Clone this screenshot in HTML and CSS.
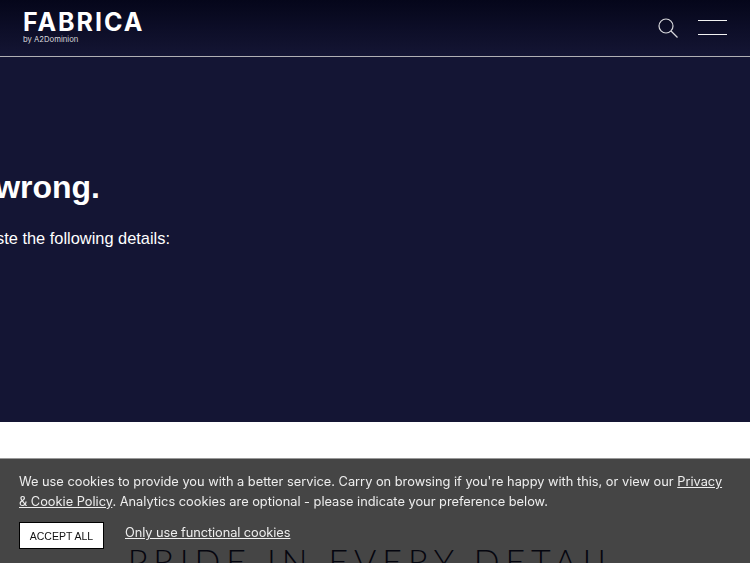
FILE: index.html
```html
<!DOCTYPE html>
<html lang="en">
<head>
    <meta charset="utf-8">
    <title>Fabrica by A2Dominion</title>
    <link rel="stylesheet" href="styles.css">
</head>
<body>
    <header class="site-header">
        <a class="logo" href="#">
            <span class="logo-name">FABRICA</span>
            <span class="logo-sub">by A2Dominion</span>
        </a>
        <div class="header-actions">
            <svg class="search-icon" width="20" height="20" viewBox="0 0 20 20" fill="none" stroke="#d8d8dc" stroke-width="1.2">
                <circle cx="8" cy="8" r="7"/>
                <path d="M13 13l6.500 6.500"/>
            </svg>
            <button class="menu-button" aria-label="Menu"></button>
        </div>
    </header>

    <section class="error-panel">
        <div class="error-copy">
            <h1>Something went wrong.</h1>
            <p>Please copy and paste the following details:</p>
        </div>
    </section>

    <section class="intro">
        <h2>PRIDE IN EVERY DETAIL</h2>
    </section>

    <div class="cookie-banner">
        <p>We use cookies to provide you with a better service. Carry on browsing if you're happy with this, or view our <a href="#">Privacy &amp; Cookie Policy</a>. Analytics cookies are optional - please indicate your preference below.</p>
        <div class="cookie-actions">
            <button class="accept-button">ACCEPT ALL</button>
            <a href="#">Only use functional cookies</a>
        </div>
    </div>
</body>
</html>
```

FILE: styles.css
```css
html, body {
    height: 100%;
}

body {
    margin: 0;
    overflow: hidden;
    background-color: #fff;
    font-family: "Liberation Sans", Arial, sans-serif;
}

/* Header */
.site-header {
    display: flex;
    justify-content: space-between;
    align-items: center;
    box-sizing: border-box;
    height: 57px;
    padding: 0 23px 1px;
    background: linear-gradient(#05061a, #141534);
    border-bottom: 1px solid #b0b0b4;
}

.logo {
    display: flex;
    flex-direction: column;
    color: #fff;
    text-decoration: none;
    font-family: Inter, sans-serif;
}

.logo-name {
    font-size: 25px;
    font-weight: 700;
    line-height: 24px;
    letter-spacing: 2px;
}

.logo-sub {
    font-size: 7.700px;
    line-height: 11px;
    color: #d8d8dc;
}

.header-actions {
    display: flex;
    align-items: center;
    gap: 20px;
}

.menu-button {
    box-sizing: border-box;
    width: 29px;
    height: 15px;
    padding: 0;
    background: none;
    border: solid #f2f2f2;
    border-width: 1px 0;
}

/* Error panel */
.error-panel {
    box-sizing: border-box;
    height: 365px;
    padding-top: 111px;
    background-color: #141534;
    color: #fff;
}

.error-copy {
    display: flex;
    flex-direction: column;
    align-items: flex-end;
    width: 170px;
    white-space: nowrap;
}

.error-copy h1 {
    margin: 0 70px 0 0;
    font-size: 32px;
    line-height: 38px;
}

.error-copy p {
    margin: 21px 0 0;
    font-size: 16.400px;
    line-height: 22px;
}

/* Heading under the banner */
.intro {
    padding: 119px 2px 0 0;
    text-align: center;
}

.intro h2 {
    margin: 0;
    font-family: Lato, sans-serif;
    font-size: 34px;
    font-weight: 300;
    line-height: 40px;
    letter-spacing: 5.900px;
    color: #14163a;
}

/* Cookie banner */
.cookie-banner {
    position: fixed;
    left: 0;
    right: 0;
    bottom: 0;
    box-sizing: border-box;
    height: 105px;
    padding: 13px 19px 0;
    background-color: rgba(0, 0, 0, 0.73);
    border-top: 1px solid #999;
    color: #eee;
    font-family: Inter, sans-serif;
    font-size: 12.800px;
    line-height: 20px;
}

.cookie-banner p {
    margin: 0;
}

.cookie-banner a {
    color: #eee;
}

.cookie-actions {
    display: flex;
    gap: 21px;
    margin-top: 10px;
    letter-spacing: -0.070px;
}

.cookie-actions a {
    margin-top: 1px;
}

.accept-button {
    width: 85px;
    height: 27px;
    padding: 0;
    background-color: #fff;
    border: 1px solid #000;
    color: #111;
    font-family: "Liberation Sans", Arial, sans-serif;
    font-size: 10.500px;
}
```
